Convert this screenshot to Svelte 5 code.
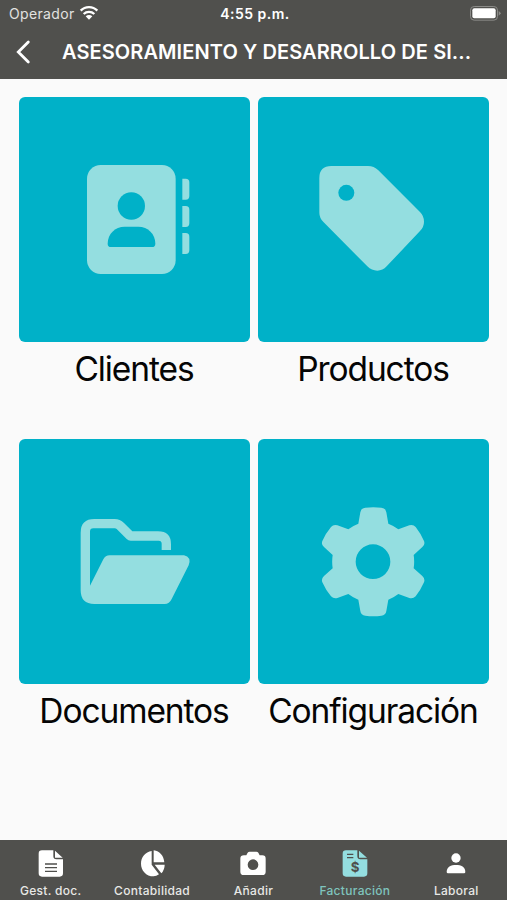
<script>
    let active = 'Facturación';

    const tiles = [
        { name: 'Clientes', icon: 'contacts', box: '-153 -159 693 735' },
        { name: 'Productos', icon: 'tag', box: '-141 -159 693 735' },
        { name: 'Documentos', icon: 'folder', box: '-138 -183 693 735' },
        { name: 'Configuración', icon: 'gear', box: '-141 -168 693 735' }
    ];

    const tabs = ['Gest. doc.', 'Contabilidad', 'Añadir', 'Facturación', 'Laboral'];
</script>

<div class="screen">
  <header>
    <div class="status">
      <div class="carrier">
        <span>Operador</span>
        <svg class="wifi" width="20" height="16" viewBox="0 0 60 48">
          <g fill="none" stroke="#fff" stroke-width="7">
            <path d="M5 17 C19 3 41 3 55 17" />
            <path d="M14 27 C23 18.500 37 18.500 46 27" />
          </g>
          <path d="M20 34 C26 29 34 29 40 34 L30 44 Z" fill="#fff" />
        </svg>
      </div>
      <div class="time">4:55 p.m.</div>
      <svg class="battery" width="31" height="15" viewBox="0 0 93 45">
        <rect x="1.500" y="1.500" width="81" height="41" rx="11" fill="none" stroke="#8b8b88" stroke-width="3" />
        <rect x="7" y="7" width="70" height="30" rx="6" fill="#fff" />
        <path d="M86 15 Q92 19 92 22 Q92 25 86 29 Z" fill="#8b8b88" />
      </svg>
    </div>
    <div class="title-bar">
      <svg class="back" width="16" height="26" viewBox="0 0 16 26">
        <path d="M13.300 3 L3.300 13 L13.300 23" fill="none" stroke="#fff" stroke-width="2.800" stroke-linecap="round" />
      </svg>
      <h1>ASESORAMIENTO Y DESARROLLO DE SI...</h1>
    </div>
  </header>

  <main>
    {#each tiles as tile}
      <section class="item">
        <button class="tile" aria-label={tile.name}>
          <svg width="231" height="245" viewBox={tile.box}>
            {#if tile.icon === 'contacts'}
              <rect class="light" x="51" y="45" width="266" height="327" rx="41" />
              <circle class="dark" cx="184" cy="168" r="41" />
              <path class="dark" d="M113 281 C113 252 135 230 164 230 H205 C234 230 256 252 256 281 Q256 291 246 291 H123 Q113 291 113 281 Z" />
              <path class="light" d="M337 86 H347 Q358 86 358 97 V138 Q358 149 347 149 H337 Z M337 168 H347 Q358 168 358 179 V220 Q358 231 347 231 H337 Z M337 249 H347 Q358 249 358 260 V301 Q358 312 347 312 H337 Z" />
            {:else if tile.icon === 'tag'}
              <path class="light" d="M79 48 H189 Q207 48 220 61 L345 186 Q357 198 357 215 Q357 231 345 243 L245 349 Q233 362 217 362 Q200 362 187 349 L56 217 Q43 204 43 188 V84 Q43 48 79 48 Z" />
              <circle class="dark" cx="124" cy="128.500" r="24" />
            {:else if tile.icon === 'folder'}
              <path class="light" d="M47 98 Q47 57 88 57 H149 Q165 57 177 69 L202 94 H279 Q318 94 318 133 V150 H290 V131 Q290 122 281 122 H197 Q190 122 185 117 L155 87 Q153 85 149 85 H85 Q75 85 75 95 V257 L115 178 Q121 166 134 166 H357 Q380 171 371 196 L320 297 Q313 312 299 312 H88 Q47 312 47 271 Z" />
            {:else}
              <path class="light" fill-rule="evenodd" d="M181 38 Q205 35 229 38 Q242 39 244 52 L250 86 Q266 92 280 103 L313 91 Q324 87 332 96 Q347 115 357 138 Q361 149 352 156 L326 180 Q329 200 326 220 L352 243 Q361 251 357 262 Q347 285 332 304 Q324 312 313 309 L280 297 Q266 308 250 314 L244 348 Q242 361 229 362 Q205 365 181 362 Q168 361 166 348 L160 314 Q144 308 130 297 L97 309 Q86 312 78 304 Q62 285 52 262 Q48 251 57 243 L83 220 Q80 200 83 180 L57 156 Q48 149 52 138 Q62 115 78 96 Q86 87 97 91 L130 103 Q144 92 160 86 L166 52 Q168 39 181 38 Z M204 148 A52 52 0 1 0 204 252 A52 52 0 1 0 204 148 Z" />
            {/if}
          </svg>
        </button>
        <div class="label">{tile.name}</div>
      </section>
    {/each}
  </main>

  <nav>
    {#each tabs as tab, index}
      <button class="tab" class:active={active === tab} on:click={() => (active = tab)}>
        <svg width="30" height="30" viewBox="0 0 90 90">
          {#if index === 0}
            <path fill="currentColor" d="M18 7 H52 V25 Q52 34 61 34 H81 V76 Q81 86 71 86 H18 Q8 86 8 76 V17 Q8 7 18 7 Z M57 8 L80 29 H57 Z" />
            <path stroke="#50504d" stroke-width="4" d="M27 48 H63 M27 59 H63 M27 70 H63" />
          {:else if index === 1}
            <path fill="currentColor" d="M44 9 V50 L66 79 Q58 85 50 85 C27 85 12 67 12 47 C12 27 25 12 44 9 Z M50 7 C69 9 80 24 82 43 H50 Z M53 50 H83 Q83 65 73 76 Z" />
          {:else if index === 2}
            <path fill="currentColor" fill-rule="evenodd" d="M18 22 H25 L29 14 Q31 11 35 11 H55 Q59 11 61 14 L65 22 H73 Q83 22 83 32 V71 Q83 81 73 81 H17 Q7 81 7 71 V32 Q7 22 18 22 Z M45 34 A16 16 0 1 0 45 66 A16 16 0 1 0 45 34 Z" />
          {:else if index === 3}
            <path fill="currentColor" d="M18 7 H52 V25 Q52 34 61 34 H82 V76 Q82 86 72 86 H18 Q8 86 8 76 V17 Q8 7 18 7 Z M57 8 L81 29 H57 Z" />
            <path stroke="#50504d" stroke-width="4" d="M21 19 H40 M21 29 H40" />
            <text x="45" y="71" text-anchor="middle">$</text>
          {:else}
            <circle cx="45" cy="30" r="14" fill="currentColor" />
            <path fill="currentColor" d="M17 72 C17 56 30 51 45 51 C60 51 73 56 73 72 Q73 76 69 76 H21 Q17 76 17 72 Z" />
          {/if}
        </svg>
        <span>{tab}</span>
      </button>
    {/each}
  </nav>
</div>

<style>
:global(body) {
  margin: 0;
  background: #fafafa;
}

.screen {
  display: flex;
  flex-direction: column;
  width: 507px;
  height: 900px;
  overflow: hidden;
  background: #fafafa;
  font-family: Inter, "Liberation Sans", sans-serif;
}

button {
  border: 0;
  padding: 0;
  font-family: inherit;
  cursor: pointer;
}

svg {
  display: block;
  flex: none;
}

header {
  height: 79px;
  flex: none;
  background: #50504d;
  color: #fff;
}

.status {
  display: grid;
  grid-template-columns: 1fr auto 1fr;
  align-items: center;
  height: 27px;
  padding: 0 6px 0 9px;
}

.carrier {
  display: flex;
  align-items: center;
  gap: 4px;
  font-size: 14px;
  letter-spacing: 0.35px;
  color: #e2e2e0;
}

.wifi {
  margin-top: -1px;
}

.time {
  font-size: 14px;
  font-weight: 600;
  letter-spacing: 0.5px;
}

.battery {
  justify-self: end;
  margin-top: -1px;
}

.title-bar {
  display: flex;
  align-items: center;
  height: 50px;
  padding-left: 15px;
}

h1 {
  margin: 0 0 0 31px;
  font-size: 20px;
  font-weight: 600;
  letter-spacing: 0.09px;
  white-space: nowrap;
}

main {
  display: grid;
  grid-template-columns: 231px 231px;
  grid-template-rows: 342px 342px;
  column-gap: 8px;
  flex: 1;
  padding: 18px 18px 0 19px;
}

.tile {
  display: block;
  width: 231px;
  height: 245px;
  border-radius: 6px;
  background: #00b1c8;
}

.light {
  fill: #94dee0;
}

.dark {
  fill: #00b1c8;
}

.label {
  margin-top: 6px;
  line-height: 42px;
  font-size: 33.5px;
  letter-spacing: -1.1px;
  text-indent: -1px;
  text-align: center;
  white-space: nowrap;
  color: #050505;
}

nav {
  display: grid;
  grid-template-columns: repeat(5, 1fr);
  flex: none;
  height: 60px;
  background: #50504d;
}

.tab {
  display: flex;
  flex-direction: column;
  align-items: center;
  padding-top: 8px;
  background: none;
  color: #fff;
}

.tab span {
  margin-top: 5px;
  font-size: 12px;
  line-height: 16px;
  font-weight: 500;
  letter-spacing: 0.3px;
  color: #e8e8e6;
}

.tab text {
  font-size: 40px;
  font-weight: 700;
  fill: #50504d;
}

.active svg {
  color: #94dee0;
}

.tab.active span {
  color: #7fc4bd;
}
</style>
